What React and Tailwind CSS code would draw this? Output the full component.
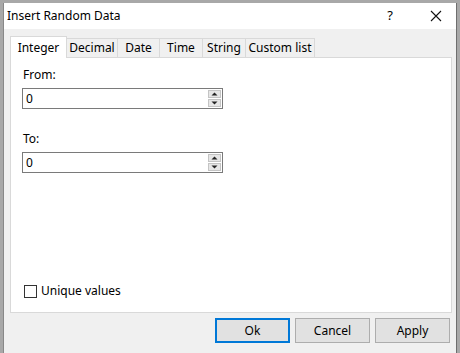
import React from "react";

const tabs = [
  { t: "Integer", w: "w-[57px]" },
  { t: "Decimal", w: "w-[51px]" },
  { t: "Date", w: "w-[42px]" },
  { t: "Time", w: "w-[43px]" },
  { t: "String", w: "w-[43px]" },
  { t: "Custom list", w: "w-[69px]" },
];

const Spin = () => (
  <div className="flex flex-col gap-px pr-px">
    {["up", "down"].map((d) => (
      <div key={d} className="w-[13px] h-[8px] bg-[#e6e6e6] border border-[#c4c4c4] flex items-center justify-center">
        <svg width="7" height="4" viewBox="0 0 7 4">
          {d === "up" ? <path d="M0.5 3.5 L3.5 0.5 L6.5 3.5 Z" fill="#222" /> : <path d="M0.5 0.5 L3.5 3.5 L6.5 0.5 Z" fill="#222" />}
        </svg>
      </div>
    ))}
  </div>
);

const NumField = ({ label, top }) => (
  <div className={top}>
    <div className="pl-[12px] text-[12px] leading-[16px] text-black">{label}</div>
    <div className="mt-[5px] ml-[11px] w-[201px] h-[21px] border border-[#7a7a7a] bg-white flex items-center justify-between">
      <span className="pl-[3px] text-[12px]">0</span>
      <Spin />
    </div>
  </div>
);

const Btn = ({ children, primary }) => (
  <button
    className={
      "w-[75px] h-[25px] text-[12px] text-black bg-[#e1e1e1] flex items-center justify-center " +
      (primary ? "border-2 border-[#0078d7]" : "border border-[#adadad]")
    }
  >
    {children}
  </button>
);

export default function App() {
  return (
    <div className="w-[460px] h-[353px] bg-[#a8a8a8] pt-[3px] pl-[3px] pr-[3px] overflow-hidden" style={{ fontFamily: '"Noto Sans", "Open Sans", sans-serif' }}>
      <div className="h-[350px] bg-[#f0f0f0] border-r border-[#6e6e6e] border-l border-l-[#888] flex flex-col">
        {/* title bar */}
        <div className="h-[26px] bg-white flex items-center">
          <span className="pl-[3px] text-[12px] text-black flex-1">Insert Random Data</span>
          <span className="w-[24px] text-center text-[13px] mr-[28px]">?</span>
          <svg width="12" height="12" viewBox="0 0 12 12" className="mr-[14px]">
            <path d="M1 1 L11 11 M11 1 L1 11" stroke="#111" strokeWidth="1.1" />
          </svg>
        </div>

        {/* tabs */}
        <div className="flex items-end pl-[6px] mt-[6px] h-[22px] text-[12px] text-black">
          {tabs.map(({ t, w }, i) =>
            i === 0 ? (
              <div key={t} className={w + " h-[22px] bg-white border border-b-0 border-[#d9d9d9] flex items-center justify-center relative -mb-px z-10"}>{t}</div>
            ) : (
              <div key={t} className={w + " h-[19px] bg-[#f0f0f0] border border-l-0 border-b-0 border-[#d9d9d9] flex items-center justify-center"}>{t}</div>
            )
          )}
        </div>

        {/* panel */}
        <div className="ml-[6px] w-[442px] h-[256px] bg-white border border-[#d9d9d9] flex flex-col">
          <NumField label="From:" top="mt-[9px]" />
          <NumField label="To:" top="mt-[22px]" />
          <div className="flex-1" />
          <div className="flex items-center gap-[4px] pl-[13px] mb-[12px]">
            <div className="w-[13px] h-[13px] border border-[#333] bg-white" />
            <span className="text-[12px]">Unique values</span>
          </div>
        </div>

        {/* buttons */}
        <div className="flex justify-end gap-[5px] pr-[6px] mt-[5px]">
          <Btn primary>Ok</Btn>
          <Btn>Cancel</Btn>
          <Btn>Apply</Btn>
        </div>
      </div>
    </div>
  );
}
